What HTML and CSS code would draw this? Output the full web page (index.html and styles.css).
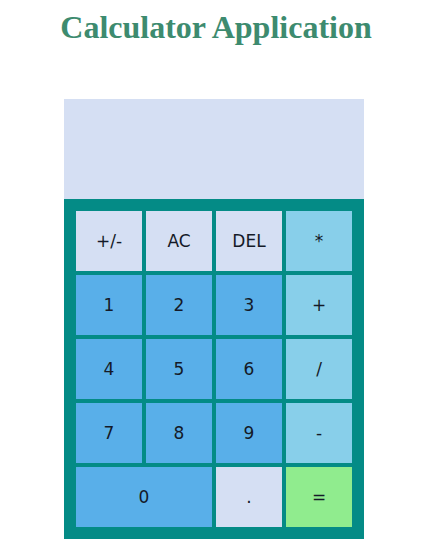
FILE: index.html
```html
<!DOCTYPE html>
<html lang="en">

<head>
  <meta charset="UTF-8" />
  <meta name="viewport" content="width=device-width, initial-scale=1.0" />
  <title>Calculator Application</title>
  <link rel="stylesheet" href="styles.css">
</head>

<body>
  <h1>Calculator Application</h1>

  <div class="calculator">
    <div class="display" id="display"></div>

    <div class="keypad">
      <button class="key fn">+/-</button>
      <button class="key fn">AC</button>
      <button class="key fn">DEL</button>
      <button class="key op">*</button>

      <button class="key num">1</button>
      <button class="key num">2</button>
      <button class="key num">3</button>
      <button class="key op">+</button>

      <button class="key num">4</button>
      <button class="key num">5</button>
      <button class="key num">6</button>
      <button class="key op">/</button>

      <button class="key num">7</button>
      <button class="key num">8</button>
      <button class="key num">9</button>
      <button class="key op">-</button>

      <button class="key num zero">0</button>
      <button class="key fn">.</button>
      <button class="key equals">=</button>
    </div>
  </div>
</body>

</html>
```

FILE: styles.css
```css
:root {
  --title: #3d8b6f;
  --frame: #048b86;
  --light: #d5dff3;
  --digit: #59afe9;
  --operator: #88cfea;
  --equals: #90ec8e;
  --key-text: #141a28;
}

* {
  box-sizing: border-box;
}

body {
  margin: 0;
  background: #fff;
  display: flex;
  flex-direction: column;
  align-items: center;
}

h1 {
  margin: 9px 12px 53px 0;
  font-family: "Liberation Serif", "Times New Roman", serif;
  font-size: 32px;
  font-weight: bold;
  color: var(--title);
}

.calculator {
  width: 300px;
  margin-right: 16px;
}

.display {
  height: 100px;
  background: var(--light);
}

.keypad {
  background: var(--frame);
  padding: 12px;
  display: grid;
  grid-template-columns: repeat(4, 1fr);
  grid-auto-rows: 60px;
  gap: 4px;
}

.key {
  border: none;
  margin: 0;
  padding: 0;
  font-family: "DejaVu Sans", Verdana, sans-serif;
  font-size: 17px;
  color: var(--key-text);
  cursor: pointer;
}

.fn {
  background: var(--light);
}

.num {
  background: var(--digit);
}

.op {
  background: var(--operator);
}

.equals {
  background: var(--equals);
}

.zero {
  grid-column: span 2;
}
```
